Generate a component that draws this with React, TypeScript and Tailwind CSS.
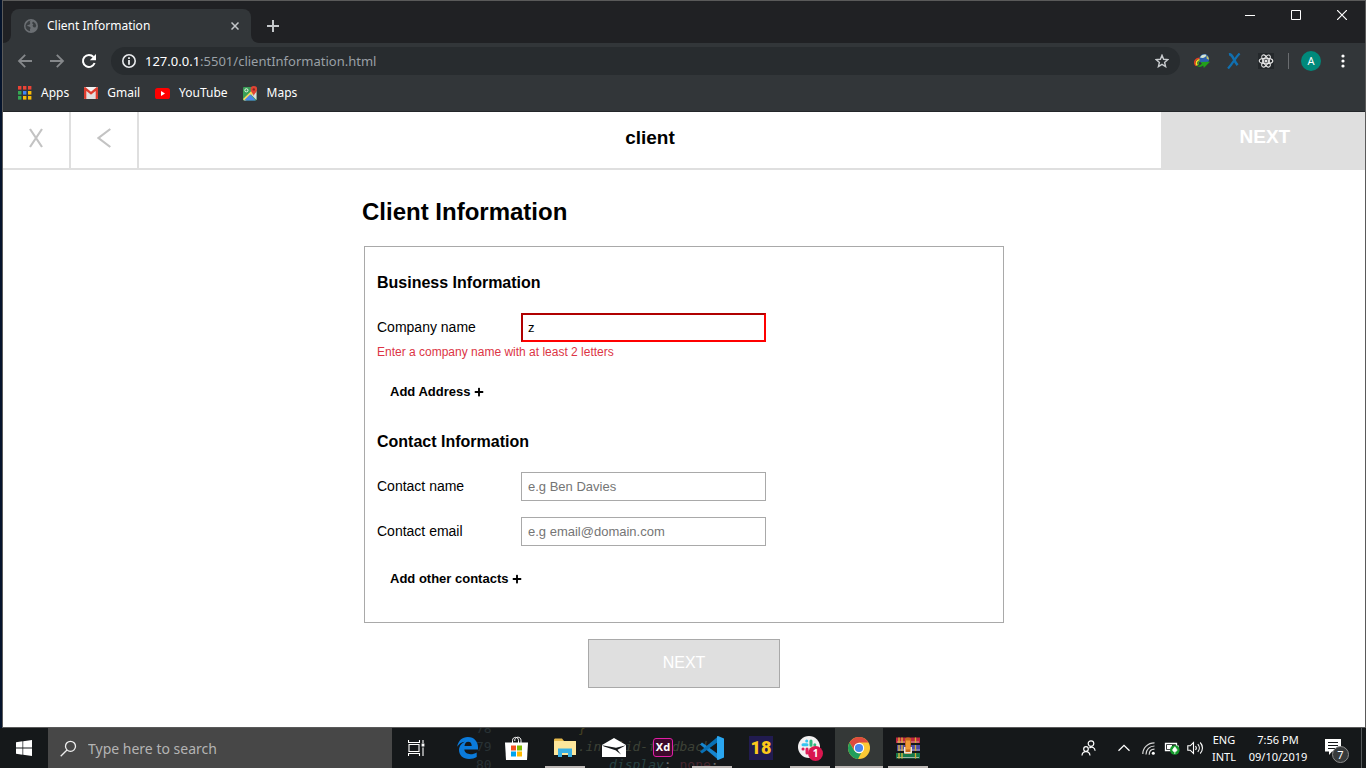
import type { ReactNode } from "react";
import { FaPlus } from "react-icons/fa";

const ui = "font-['Noto_Sans','Open_Sans',sans-serif]";

function GlobeIcon() {
  return (
    <svg width="14" height="14" viewBox="0 0 14 14" aria-hidden="true">
      <circle cx="7" cy="7" r="7" fill="#6b6f73" />
      <path d="M6.8 1.6 5.6 3l.8 1-1 1.8L3.6 6l-.4 1 2 .6 1.5 1.2-.8 1.6.2 1.8A5.6 5.6 0 0 1 1.5 6.5L2.3 4.5 4.4 2.2z" fill="#3a3e41" />
      <path d="M9 2.4 8 4.2l1.4 1-.9 1.6 1 1.4 1.8.2 1-1.6A5.4 5.4 0 0 0 9 2.4z" fill="#3a3e41" />
    </svg>
  );
}

function ArrowIcon({ flip = false }: { flip?: boolean }) {
  return (
    <svg width="16" height="16" viewBox="0 0 16 16" fill="none" stroke="#85888b" strokeWidth="1.8" className={flip ? "rotate-180" : ""} aria-hidden="true">
      <path d="M15 8H2.2M8.2 1.8 2 8l6.2 6.2" />
    </svg>
  );
}

function ReloadIcon() {
  return (
    <svg width="16" height="16" viewBox="0 0 16 16" fill="none" aria-hidden="true">
      <path d="M13.6 10A6 6 0 1 1 12.5 4" stroke="#fff" strokeWidth="2" />
      <path d="M15 1v6.2H8.8z" fill="#fff" />
    </svg>
  );
}

function Bookmark({ label, children }: { label: string; children: ReactNode }) {
  return (
    <a href="#" className="flex items-center gap-[9px]">
      {children}
      <span>{label}</span>
    </a>
  );
}

const appDots = ["#ea4335", "#ea4335", "#ea4335", "#34a853", "#4285f4", "#fbbc04", "#34a853", "#fbbc04", "#fbbc04"];

function BrowserChrome() {
  return (
    <header className={`${ui} shrink-0 text-white`}>
      <div className="flex h-[42px] items-start justify-between bg-[#202124]">
        <div className="flex h-full items-end">
          <div className="h-2 w-2 bg-[#323639]"><div className="h-2 w-2 rounded-br-lg bg-[#202124]" /></div>
          <div className="flex h-[34px] w-60 items-center rounded-t-lg bg-[#323639] pr-[10px] pl-[13px]">
            <GlobeIcon />
            <span className="ml-[9px] flex-1 text-[12px] leading-4">Client Information</span>
            <button type="button" aria-label="Close tab" className="p-[2px]">
              <svg width="8" height="8" viewBox="0 0 8 8" stroke="#c4c7ca" strokeWidth="1.5"><path d="m.5.5 7 7m0-7-7 7" /></svg>
            </button>
          </div>
          <div className="h-2 w-2 bg-[#323639]"><div className="h-2 w-2 rounded-bl-lg bg-[#202124]" /></div>
          <button type="button" aria-label="New tab" className="flex h-[34px] w-7 items-center justify-center">
            <svg width="12" height="12" viewBox="0 0 12 12" stroke="#c4c7ca" strokeWidth="2"><path d="M6 0v12M0 6h12" /></svg>
          </button>
        </div>
        <div className="flex h-7">
          <button type="button" aria-label="Minimize" className="flex w-[46px] items-center justify-center">
            <svg width="10" height="10" viewBox="0 0 10 10" fill="#fff"><path d="M0 5h10v1H0z" /></svg>
          </button>
          <button type="button" aria-label="Maximize" className="flex w-[46px] items-center justify-center">
            <svg width="10" height="10" viewBox="0 0 10 10" fill="none" stroke="#fff"><path d="M.5.5h9v9h-9z" /></svg>
          </button>
          <button type="button" aria-label="Close" className="flex w-[46px] items-center justify-center">
            <svg width="10" height="10" viewBox="0 0 10 10" stroke="#fff" strokeWidth="1.2"><path d="m0 0 10 10M10 0 0 10" /></svg>
          </button>
        </div>
      </div>

      <div className="flex h-9 items-center bg-[#323639] px-[6px]">
        <button type="button" aria-label="Back" className="flex w-8 justify-center"><ArrowIcon /></button>
        <button type="button" aria-label="Forward" className="flex w-8 justify-center"><ArrowIcon flip /></button>
        <button type="button" aria-label="Reload" className="flex w-8 justify-center"><ReloadIcon /></button>
        <div className="mx-[6px] flex h-7 flex-1 items-center rounded-full bg-[#282c2f] pr-[11px] pl-[11px]">
          <svg width="14" height="14" viewBox="0 0 14 14" fill="none" aria-hidden="true">
            <circle cx="7" cy="7" r="6.2" stroke="#e8eaed" strokeWidth="1.6" />
            <path d="M6.1 3.2h1.8V5H6.1zM6.1 6h1.8v4.8H6.1z" fill="#e8eaed" />
          </svg>
          <div role="textbox" aria-label="Address" contentEditable suppressContentEditableWarning className="ml-[9px] flex-1 text-[13px] leading-5 text-[#9aa0a6]">
            <span className="text-white">127.0.0.1</span>:5501/clientInformation.html
          </div>
          <button type="button" aria-label="Bookmark this page">
            <svg width="14" height="14" viewBox="0 0 14 14" fill="none" stroke="#c8cbce" strokeWidth="1.4"><path d="m7 1.3 1.6 4 4.2.3-3.2 2.8 1 4.2L7 10.3l-3.6 2.3 1-4.2L1.2 5.6l4.2-.3z" /></svg>
          </button>
        </div>
        <button type="button" aria-label="Download manager" className="flex w-8 justify-center">
          <svg width="16" height="14" viewBox="0 0 16 14">
            <path d="M2.2 11.8C-.6 8.5 1 4.2 6 4.2" fill="none" stroke="#e53e22" strokeWidth="1.6" />
            <path d="M3.4 11.6C1.2 9 2.6 5.8 6.5 5.6" fill="none" stroke="#f7e01f" strokeWidth="1.5" />
            <path d="M4.6 10.6C3.4 9 4.2 7.2 6.6 7" fill="none" stroke="#3fb53a" strokeWidth="1.2" />
            <circle cx="10.3" cy="5" r="4.9" fill="#2b5fae" />
            <path d="M6 3.6C7 .9 9.6-.2 12.2.7 12.6 3 9.2 5 6 3.6z" fill="#d5e6d2" />
            <path d="M12.5 1.5c1.8 1 2.5 2.7 2.4 4.3l-2.2-1z" fill="#c9c35a" />
            <path d="M2.5 11.8c2.4.3 4-.6 5.4-2L6.8 8 16 7.8 9.8 14l-.5-2.4c-2 1.6-4.8 1.8-6.8.2z" fill="#22a01a" />
          </svg>
        </button>
        <button type="button" aria-label="X extension" className="flex w-8 justify-center">
          <svg width="14" height="16" viewBox="0 0 14 16" fill="none" stroke="#1170b0"><path d="M2 1.4c4-.8 4 5.8 8.6 10.8" strokeWidth="2.6" /><path d="M12.6.5C8.4 4.5 6 10.5 1 15.5" strokeWidth="2.2" /></svg>
        </button>
        <button type="button" aria-label="React developer tools" className="flex w-8 justify-center">
          <svg width="16" height="16" viewBox="0 0 16 16" fill="none" stroke="#e9e9e9" strokeWidth="1.1">
            <path d="M0 0h16v16H0z" fill="#24282b" stroke="none" />
            <ellipse cx="8" cy="8" rx="6.8" ry="2.7" />
            <ellipse cx="8" cy="8" rx="6.8" ry="2.7" transform="rotate(60 8 8)" />
            <ellipse cx="8" cy="8" rx="6.8" ry="2.7" transform="rotate(120 8 8)" />
            <circle cx="8" cy="8" r="1" fill="#e9e9e9" />
          </svg>
        </button>
        <div className="mx-[6px] h-4 w-px bg-[#6a6d70]" />
        <button type="button" aria-label="Profile" className="ml-[6px] flex size-5 items-center justify-center rounded-full bg-[#00897b] text-[11px]">A</button>
        <button type="button" aria-label="Menu" className="ml-[6px] flex w-8 justify-center">
          <svg width="4" height="14" viewBox="0 0 4 14" fill="#fff"><circle cx="2" cy="2" r="1.6" /><circle cx="2" cy="7" r="1.6" /><circle cx="2" cy="12" r="1.6" /></svg>
        </button>
      </div>

      <nav aria-label="Bookmarks" className="flex h-[33px] items-center gap-[15px] border-b border-[#232629] bg-[#323639] pb-1 pl-[15px] text-[12px] leading-4">
        <Bookmark label="Apps">
          <svg width="14" height="14" viewBox="0 0 14 14" aria-hidden="true">
            {appDots.map((c, i) => (
              <rect key={i} x={(i % 3) * 5} y={Math.floor(i / 3) * 5} width="3.4" height="3.6" fill={c} />
            ))}
          </svg>
        </Bookmark>
        <Bookmark label="Gmail">
          <svg width="14" height="12" viewBox="0 0 14 12" aria-hidden="true">
            <rect width="14" height="12" rx="1" fill="#f2f2f2" />
            <path d="M3 4.5 7 8l4-3.5V12H3z" fill="#dedede" />
            <path d="M0 1.2C0 .4.6 0 1.2 0L7 4.8 12.8 0c.7 0 1.2.5 1.2 1.2V11c0 .6-.4 1-1 1h-1.4V4L7 7.7 2.4 4v8H1c-.6 0-1-.4-1-1z" fill="#dc3c2e" />
          </svg>
        </Bookmark>
        <Bookmark label="YouTube">
          <svg width="15" height="11" viewBox="0 0 15 11" aria-hidden="true">
            <rect width="15" height="11" rx="2.6" fill="#f00" />
            <path d="m6 3.1 4 2.4-4 2.4z" fill="#fff" />
          </svg>
        </Bookmark>
        <Bookmark label="Maps">
          <svg width="15" height="15" viewBox="0 0 15 15" aria-hidden="true">
            <rect y="1" width="13.5" height="13.5" rx="1" fill="#3a9e57" />
            <path d="M8.5 9 13.5 5v9z" fill="#dedede" />
            <path d="M0 13 12 1.5l2 2-11 11H1z" fill="#fbd75b" />
            <path d="M1 14.5 7.3 8.3l5.4 6.2z" fill="#4a86e8" />
            <circle cx="3.4" cy="4.3" r="1.6" fill="none" stroke="#e9f4ea" />
            <path d="M10.8 10C10.4 7.3 7.6 6.4 7.6 3.3a3.2 3.2 0 0 1 6.5 0c0 3.1-2.8 4-3.3 6.7z" fill="#e04434" />
            <circle cx="10.8" cy="3.4" r="1.2" fill="#88261e" />
          </svg>
        </Bookmark>
      </nav>
    </header>
  );
}

function Field({ id, label, children }: { id: string; label: string; children: ReactNode }) {
  return (
    <div className="flex items-center">
      <label htmlFor={id} className="w-36 pb-[2px] text-[14px] leading-5">{label}</label>
      {children}
    </div>
  );
}

const inputBase = "h-[29px] w-[245px] bg-white text-[13px] placeholder:text-[#757575] outline-none";

function AddButton({ children }: { children: ReactNode }) {
  return (
    <button type="button" className="ml-[13px] flex items-center gap-1 text-[13px] leading-5 font-bold">
      {children}
      <FaPlus size={10} aria-hidden="true" />
    </button>
  );
}

function ClientPage() {
  return (
    <main className="flex-1 bg-white font-['Liberation_Sans',Arial,sans-serif] text-black">
      <div className="flex h-[58px] border-b-2 border-[#dfdfdf]">
        <button type="button" aria-label="Close form" className="flex w-[5%] items-center justify-center border-r-2 border-[#dfdfdf] pb-1">
          <svg width="14" height="20" viewBox="0 0 14 20" fill="none" stroke="#c3c3c3" strokeWidth="2.2"><path d="m1 1 12 18M13 1 1 19" /></svg>
        </button>
        <button type="button" aria-label="Previous step" className="flex w-[5%] items-center justify-center border-r-2 border-[#dfdfdf] pb-1">
          <svg width="14" height="20" viewBox="0 0 14 20" fill="none" stroke="#c3c3c3" strokeWidth="2.2"><path d="M13.3 1 1.5 10l11.8 9" /></svg>
        </button>
        <h3 className="flex flex-1 items-center justify-center pb-1 text-[19px] font-bold">client</h3>
        <button type="button" className="-mb-[2px] w-[15%] bg-[#dfdfdf] pb-2 pl-1 text-[19px] font-bold text-white">NEXT</button>
      </div>

      <form className="mx-auto w-full max-w-[644px]" onSubmit={(e) => e.preventDefault()}>
        <h1 className="mt-7 text-[24px] leading-7 font-bold">Client Information</h1>
        <div className="mx-[2px] mt-5 border border-[#a9a9a9] px-3 pt-[26px] pb-[33px]">
          <h2 className="text-[16px] leading-5 font-bold">Business Information</h2>
          <div className="mt-5">
            <Field id="company" label="Company name">
              <input id="company" type="text" defaultValue="z" aria-invalid="true" aria-describedby="company-error" className={`${inputBase} border-2 border-t-[#b00000] border-r-[#f00] border-b-[#f00] border-l-[#b00000] px-[5px]`} />
            </Field>
            <p id="company-error" className="mt-[2px] text-[12px] leading-4 text-[#dc3545]">Enter a company name with at least 2 letters</p>
          </div>
          <div className="mt-[22px]"><AddButton>Add Address</AddButton></div>

          <h2 className="mt-[30px] text-[16px] leading-5 font-bold">Contact Information</h2>
          <div className="mt-5 flex flex-col gap-4">
            <Field id="contact-name" label="Contact name">
              <input id="contact-name" type="text" placeholder="e.g Ben Davies" className={`${inputBase} border border-[#a9a9a9] px-[6px]`} />
            </Field>
            <Field id="contact-email" label="Contact email">
              <input id="contact-email" type="email" placeholder="e.g email@domain.com" className={`${inputBase} border border-[#a9a9a9] px-[6px]`} />
            </Field>
          </div>
          <div className="mt-[23px]"><AddButton>Add other contacts</AddButton></div>
        </div>
        <button type="submit" className="mx-auto mt-4 block h-[49px] w-48 border border-[#a9a9a9] bg-[#dfdfdf] pb-[2px] text-[16px] text-white">NEXT</button>
      </form>
    </main>
  );
}

function Task({ label, open = false, active = false, children }: { label: string; open?: boolean; active?: boolean; children: ReactNode }) {
  return (
    <button type="button" aria-label={label} className={`flex w-12 flex-col items-center ${active ? "bg-[#343837]" : ""}`}>
      <span className="flex flex-1 items-center pt-px">{children}</span>
      <span className={`h-[2px] ${active ? "w-full" : "w-10"} ${open ? "bg-[#bdb8b6]" : ""}`} />
    </button>
  );
}

function Taskbar() {
  return (
    <footer className={`${ui} relative flex h-10 shrink-0 overflow-hidden bg-[#15181a] text-white`}>
      <pre aria-hidden="true" className="absolute -top-2 left-[476px] font-['DejaVu_Sans_Mono',monospace] text-[13px] leading-[18px] opacity-35">
        <span className="text-[#4d6268]">78</span>{"           "}<span className="text-[#a09030]">{"}"}</span>{"\n"}
        <span className="text-[#4d6268]">79</span>{"           "}<i className="text-[#87906c]">.invalid-feedback</i>{"\n"}
        <span className="text-[#4d6268]">80</span>{"               "}<i className="text-[#4d9290]">display</i>: <span className="text-[#a04058]">none</span>;
      </pre>
      <button type="button" aria-label="Start" className="relative flex w-12 items-center justify-center">
        <svg width="16" height="16" viewBox="0 0 16 16" fill="#fff"><path d="M0 2.2 6.5 1.3v6.3H0zM7.2 1.2 16 0v7.6H7.2zM0 8.4h6.5v6.3L0 13.8zM7.2 8.4H16V16l-8.8-1.2z" /></svg>
      </button>
      <label className="relative flex w-[344px] items-center bg-[#474747] pl-3">
        <svg width="17" height="17" viewBox="0 0 17 17" fill="none" stroke="#eee" strokeWidth="1.3" aria-hidden="true"><circle cx="10.5" cy="6.3" r="5" /><path d="M7 10 .7 16.2" /></svg>
        <input type="search" aria-label="Type here to search" placeholder="Type here to search" className="ml-[11px] min-w-0 flex-1 bg-transparent text-[14px] outline-none placeholder:text-[#b4b4b4]" />
      </label>
      <nav aria-label="Taskbar" className="relative flex flex-1">
        <button type="button" aria-label="Task view" className="mr-[3px] flex w-12 items-center justify-center">
          <svg width="17" height="16" viewBox="0 0 17 16" fill="none" stroke="#fff" strokeWidth="1.1"><path d="M1 4.5h10v7H1zM.5 0v2.5h11V0M.5 16v-2.5h11V16M15 0v3M15 7.5V16" /><path d="M13.6 3.5h2.8v3h-2.8z" fill="#fff" stroke="none" /></svg>
        </button>
        <div className="flex gap-px">
          <Task label="Edge">
            <svg width="21" height="22" viewBox="0 0 21 22"><path d="M.2 9.8C1.2 3.6 5.2 0 10.8 0 17.5 0 21 5 21 10.2v2.4H7.3c.2 3.1 3 4.6 6.2 4.6 2.4 0 4.4-.7 6.2-1.8v4.6c-2 1.2-4.5 2-7.6 2C5.9 22 2 18 2 13c0-3.2 2-6.7 5.9-8.3C4.5 5 1.8 7 .2 9.8zm7.3-.9h7.2c0-2.7-1.2-4.2-3.5-4.2-2 0-3.4 1.6-3.7 4.2z" fill="#0b7bdb" /></svg>
          </Task>
          <Task label="Store">
            <svg width="23" height="24" viewBox="0 0 23 24"><path d="M7.5 7V4.5C7.5.3 13.5.3 13.5 4.5V7M9.8 5V3.5C10.6.3 16 .3 16 4.5V7" fill="none" stroke="#fff" strokeWidth="1" /><path d="M0 6.5h23L22 24H1z" fill="#fff" /><path d="M6 9.5h5v5H6z" fill="#f25022" /><path d="M12 9.5h5v5h-5z" fill="#7fba00" /><path d="M6 15.5h5v5H6z" fill="#00a4ef" /><path d="M12 15.5h5v5h-5z" fill="#ffb900" /></svg>
          </Task>
          <Task label="File Explorer" open>
            <svg width="22" height="19" viewBox="0 0 22 19"><path d="M0 2c0-1 .5-1.5 1.5-1.5H8L10 3h12v14H0z" fill="#e6b94c" /><path d="M1 3h20c.6 0 1 .4 1 1v13H0V4c0-.6.4-1 1-1z" fill="#fde69b" /><path d="M4 10.5h14V19h-4v-4H8v4H4z" fill="#39b0e4" /></svg>
          </Task>
          <Task label="Mail">
            <svg width="24" height="19" viewBox="0 0 24 19"><path d="M0 7 12 0l12 7v12H0z" fill="#fff" /><path d="m0 7.2 14 2.6 10-2.6-8.5 4.6L19 16.5l-5.5-4.2L2 8.6z" fill="#15181a" /></svg>
          </Task>
          <Task label="Adobe XD">
            <span className="flex h-[19px] w-5 items-center justify-center rounded-[3px] border border-[#e01fa6] bg-[#3d0a2c] text-[11px] font-bold">Xd</span>
          </Task>
          <Task label="Visual Studio Code" open>
            <svg width="24" height="24" viewBox="0 0 24 24"><path d="m0 8.4 2-1.8L18 18v5.5z" fill="#1685cf" /><path d="M0 15.6 2 17.4 18 6V.5z" fill="#0870b5" /><path d="m18 0 6 2.4v19.2L18 24c-.8 0-1-.7-1-1V1c0-.3.2-1 1-1z" fill="#2aa6f0" /></svg>
          </Task>
          <Task label="Football 18">
            <span className="flex size-6 items-center justify-center bg-[#211b50] font-['Roboto',sans-serif] text-[18px] leading-6 font-black text-[#fbc81b]">18</span>
          </Task>
          <Task label="Slack, 1 notification" open>
            <span className="relative flex size-6 items-start">
              <svg width="22" height="22" viewBox="0 0 22 22"><circle cx="11" cy="11" r="11" fill="#f3f1f2" /><g strokeWidth="3" strokeLinecap="round" fill="none"><path d="M8.7 5v.1M5 8.8h4" stroke="#36c5f0" /><path d="M13 5v4.2M16.8 8.8v.1" stroke="#2eb67d" /><path d="M5 13h.1M9 13v4" stroke="#e01e5a" /><path d="M13 13h4M13 17v-.1" stroke="#ecb22e" /></g></svg>
              <span className="absolute top-[10px] left-[10px] flex size-[15px] items-center justify-center rounded-full bg-[#d9164f] text-[10px] font-bold">1</span>
            </span>
          </Task>
          <Task label="Chrome" open active>
            <svg width="22" height="22" viewBox="0 0 22 22"><circle cx="11" cy="11" r="11" fill="#fbc935" /><path d="M1.5 5.5a11 11 0 0 1 19 0H11L6.5 13.5z" fill="#dd4b3e" /><path d="M1.5 5.5 6.3 13.7 11 16.4l2.2-.4L10 22A11 11 0 0 1 1.5 5.5z" fill="#229e5b" /><circle cx="11" cy="11" r="5.2" fill="#fff" /><circle cx="11" cy="11" r="4.1" fill="#4a87ee" /></svg>
          </Task>
          <Task label="WinRAR" open>
            <svg width="24" height="22" viewBox="0 0 24 22"><path d="M0 .5h24V6H0z" fill="#c02740" /><path d="M1 8h23v6H1z" fill="#4d4ba8" /><path d="M0 16h24v5.5H0z" fill="#16794b" /><path d="M1 5h22M2 13h22M1 20.5h22" stroke="#d8cfcf" strokeOpacity=".7" /><path d="M3 .5V6M3 8v6M3 16v5.5M6 .5V6M6 8v6M6 16v5.5" stroke="#e0b93a" strokeWidth="1.3" /><path d="M19.5.5V6M19.5 8v6M19.5 16v5.5" stroke="#d8ad2e" strokeWidth="1.3" /><path d="M9 2c0-2 6-2 6 0v15H9z" fill="#c56a1e" /><path d="M10 3.5h4v9h-4z" fill="#f09a35" /><path d="M8 10h1.5v5h5v-5H16v6.5H8z" fill="#efe6d4" /></svg>
          </Task>
        </div>
      </nav>
      <div className="relative flex items-stretch text-[11px] leading-[17px]">
        <button type="button" aria-label="People" className="mr-[7px] flex w-8 items-center justify-center">
          <svg width="15" height="16" viewBox="0 0 15 16" fill="none" stroke="#fff" strokeWidth="1.2"><circle cx="10" cy="3.6" r="2.8" /><circle cx="5" cy="9" r="2.3" /><path d="M1 15.5c.3-5.3 7.6-5.3 8 0M8.4 8c2.6-2 5.5-.4 5.7 2.7" /></svg>
        </button>
        <button type="button" aria-label="Show hidden icons" className="flex w-[25px] items-center justify-center">
          <svg width="12" height="8" viewBox="0 0 12 8" fill="none" stroke="#fff" strokeWidth="1.3"><path d="m.5 6.8 5.5-5.5 5.5 5.5" /></svg>
        </button>
        <button type="button" aria-label="Network" className="flex w-6 items-center justify-center">
          <svg width="13" height="13" viewBox="0 0 13 13" fill="none" stroke="#d6d6d6" strokeWidth="1.2"><path d="M.8 12C.8 5.8 5.8.8 12.5.8M4 12.5C4 7.6 7.6 4 12.5 4M7.2 12.7c0-3.3 2.2-5.5 5.3-5.5" /><circle cx="11.3" cy="11.3" r="1.5" fill="#fff" stroke="none" /></svg>
        </button>
        <button type="button" aria-label="Battery" className="mr-px flex w-6 items-center justify-center">
          <svg width="16" height="14" viewBox="0 0 16 14" fill="none"><path d="M1.5 2.5h11v7h-11z" stroke="#fff" strokeWidth="1.3" /><path d="M3 4h5v4H3zM13 4.5h1.8v3H13z" fill="#fff" /><circle cx="10.8" cy="9" r="4.8" fill="#159a2c" /><path d="M10.8 5.7 13 8.8c0 1.2-1 2-2.2 2s-2.2-.8-2.2-2zM10.8 9v4" fill="#fff" stroke="#fff" strokeWidth=".7" /></svg>
        </button>
        <button type="button" aria-label="Volume" className="flex w-5 items-center justify-center">
          <svg width="17" height="14" viewBox="0 0 17 14" fill="none" stroke="#fff" strokeWidth="1.1"><path d="M.8 4.8h2.4L6.5 1.5v11L3.2 9.2H.8zM8.5 5c1 1.2 1 2.8 0 4M10.8 3.2c2 2.2 2 5.4 0 7.6M13.2 1.5c3 3.2 3 7.8 0 11" /></svg>
        </button>
        <button type="button" className="flex w-[38px] flex-col items-center pt-[3px]"><span>ENG</span><span>INTL</span></button>
        <button type="button" className="flex w-[70px] flex-col items-center pt-[3px]"><span>7:56 PM</span><span>09/10/2019</span></button>
        <button type="button" aria-label="7 notifications" className="flex w-12 items-center justify-center">
          <span className="relative mt-[5px] block h-6 w-6">
            <svg width="17" height="17" viewBox="0 0 17 17"><path d="M0 0h16v12.5H7L4 16v-3.5H0z" fill="#fff" /><path d="M3 3.5h10M3 6.5h10M3 9.5h7" stroke="#15181a" /></svg>
            <span className="absolute top-[7px] left-[7px] flex size-[17px] items-center justify-center rounded-full border border-[#8c8c8c] bg-[#373a3b] text-[11px]">7</span>
          </span>
        </button>
        <div className="h-full w-[5px] border-l border-[#54585a]" />
      </div>
    </footer>
  );
}

export default function App() {
  return (
    <div className="flex min-h-screen flex-col bg-[#05142c]">
      <div className="ml-[2px] flex flex-1 flex-col border border-[#5a5a5a]">
        <BrowserChrome />
        <ClientPage />
      </div>
      <Taskbar />
    </div>
  );
}
